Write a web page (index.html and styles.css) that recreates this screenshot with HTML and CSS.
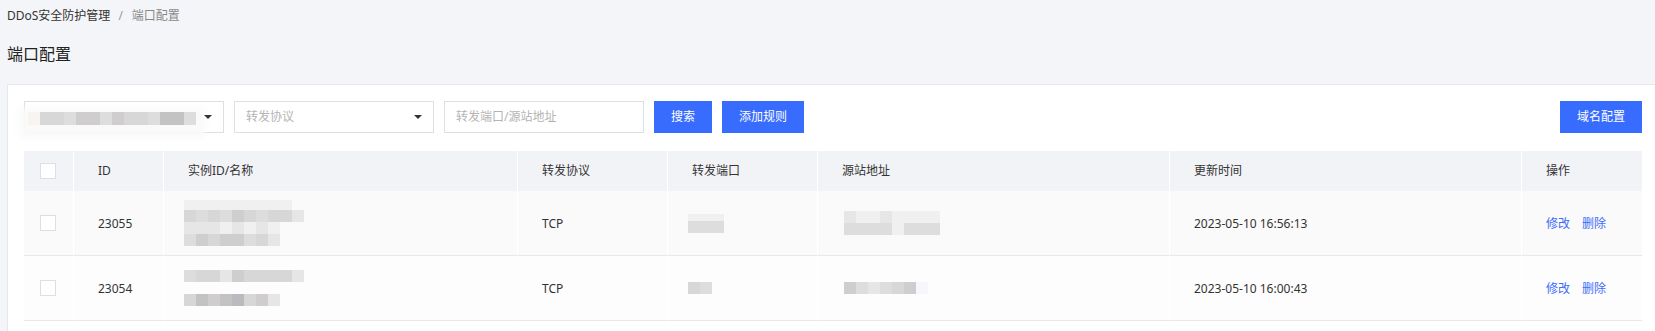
FILE: index.html
```html
<!DOCTYPE html>
<html lang="zh-CN">
<head>
<meta charset="utf-8">
<title>端口配置</title>
<link rel="stylesheet" href="styles.css">
</head>
<body>
<div class="crumb"><span class="crumb-link">DDoS安全防护管理</span><span class="crumb-sep">/</span><span class="crumb-cur">端口配置</span></div>
<h1 class="title">端口配置</h1>
<div class="panel">
  <div class="toolbar">
    <div class="select">
      <div class="mosaic mosaic-select">
        <span class="c-cream"></span><span class="g3"></span><span class="g3"></span><span class="g2"></span><span class="g4"></span><span class="g4"></span><span class="g2"></span><span class="g4"></span><span class="g3"></span><span class="g3"></span><span class="g2"></span><span class="g5"></span><span class="g5"></span><span class="g2"></span>
      </div>
      <i class="caret"></i>
    </div>
    <div class="select"><span class="placeholder">转发协议</span><i class="caret"></i></div>
    <div class="input"><span class="placeholder">转发端口/源站地址</span></div>
    <button class="btn">搜索</button>
    <button class="btn">添加规则</button>
    <button class="btn btn-right">域名配置</button>
  </div>
  <table class="grid">
    <colgroup>
      <col class="w-check"><col class="w-id"><col class="w-inst"><col class="w-proto"><col class="w-port"><col class="w-src"><col class="w-time"><col class="w-op">
    </colgroup>
    <thead>
      <tr>
        <th class="cell-check"><span class="checkbox"></span></th>
        <th>ID</th>
        <th>实例ID/名称</th>
        <th>转发协议</th>
        <th>转发端口</th>
        <th>源站地址</th>
        <th>更新时间</th>
        <th>操作</th>
      </tr>
    </thead>
    <tbody>
      <tr class="row-odd">
        <td class="cell-check"><span class="checkbox"></span></td>
        <td>23055</td>
        <td>
          <div class="mosaic m10 rows-a shift-l">
            <span class="g0"></span><span class="g0"></span><span class="g0"></span><span class="g0"></span><span class="g0"></span><span class="g0"></span><span class="g0"></span><span class="g0"></span><span class="g0"></span><span class="blank"></span>
            <span class="g3"></span><span class="g2"></span><span class="g3"></span><span class="g2"></span><span class="g4"></span><span class="g3"></span><span class="g2"></span><span class="g3"></span><span class="g3"></span><span class="g1"></span>
            <span class="g1"></span><span class="g1"></span><span class="g1"></span><span class="g0"></span><span class="g1"></span><span class="g0"></span><span class="g1"></span><span class="g0"></span><span class="blank"></span><span class="blank"></span>
            <span class="g2"></span><span class="g4"></span><span class="g3"></span><span class="g4"></span><span class="g4"></span><span class="g2"></span><span class="g3"></span><span class="g1"></span><span class="blank"></span><span class="blank"></span>
          </div>
        </td>
        <td>TCP</td>
        <td>
          <div class="mosaic m3 rows-b shift-l">
            <span class="g0"></span><span class="g0"></span><span class="g0"></span>
            <span class="g2"></span><span class="g2"></span><span class="g2"></span>
          </div>
        </td>
        <td>
          <div class="mosaic m8 shift-r">
            <span class="g1"></span><span class="g0"></span><span class="g0"></span><span class="g1"></span><span class="g0"></span><span class="g0"></span><span class="g0"></span><span class="g0"></span>
            <span class="g2"></span><span class="g2"></span><span class="g2"></span><span class="g2"></span><span class="g0"></span><span class="g2"></span><span class="g2"></span><span class="g2"></span>
          </div>
        </td>
        <td>2023-05-10 16:56:13</td>
        <td><a class="link">修改</a><a class="link">删除</a></td>
      </tr>
      <tr class="row-even">
        <td class="cell-check"><span class="checkbox"></span></td>
        <td>23054</td>
        <td>
          <div class="mosaic m10 shift-l">
            <span class="g2"></span><span class="g3"></span><span class="g3"></span><span class="g1"></span><span class="g4"></span><span class="g3"></span><span class="g3"></span><span class="g3"></span><span class="g3"></span><span class="g1"></span>
            <span class="blank"></span><span class="blank"></span><span class="blank"></span><span class="blank"></span><span class="blank"></span><span class="blank"></span><span class="blank"></span><span class="blank"></span><span class="blank"></span><span class="blank"></span>
            <span class="g3"></span><span class="g5"></span><span class="g4"></span><span class="g5"></span><span class="g6"></span><span class="g3"></span><span class="g4"></span><span class="g1"></span><span class="blank"></span><span class="blank"></span>
          </div>
        </td>
        <td>TCP</td>
        <td>
          <div class="mosaic m3 shift-l">
            <span class="g3"></span><span class="g2"></span><span class="blank"></span>
          </div>
        </td>
        <td>
          <div class="mosaic m8 shift-r">
            <span class="g4"></span><span class="g2"></span><span class="g1"></span><span class="g2"></span><span class="g3"></span><span class="g4"></span><span class="c-blue"></span><span class="blank"></span>
          </div>
        </td>
        <td>2023-05-10 16:00:43</td>
        <td><a class="link">修改</a><a class="link">删除</a></td>
      </tr>
    </tbody>
  </table>
</div>
</body>
</html>
```

FILE: styles.css
```css
* { box-sizing: border-box; }

html, body {
  margin: 0;
  padding: 0;
}

body {
  background: #f4f5f8;
  font-family: "Noto Sans", "Noto Sans CJK SC", sans-serif;
  font-size: 12px;
  color: #333;
  overflow: hidden;
}

.crumb {
  padding: 6px 7px 0;
  height: 26px;
  line-height: 20px;
  font-size: 12px;
}

.crumb-link { color: #333; }

.crumb-sep {
  color: #999;
  margin: 0 9px 0 8px;
}

.crumb-cur { color: #888; }

.title {
  margin: 16px 0 0;
  padding-left: 7px;
  font-size: 16px;
  line-height: 24px;
  font-weight: normal;
  color: #222;
}

.panel {
  margin: 18px 0 0 7px;
  background: #fff;
  border: 1px solid #e6e8eb;
  border-right: 0;
  padding: 16px 13px 0 16px;
  height: 260px;
}

.toolbar {
  display: flex;
  align-items: center;
  gap: 10px;
  height: 32px;
}

.select,
.input {
  width: 200px;
  height: 32px;
  border: 1px solid #dcdfe3;
  display: flex;
  align-items: center;
  padding: 0 11px;
  background: #fff;
}

.placeholder {
  color: #b4b4b4;
  line-height: 30px;
}

.caret {
  margin-left: auto;
  width: 0;
  height: 0;
  border-left: 4px solid transparent;
  border-right: 4px solid transparent;
  border-top: 4px solid #333;
}

.btn {
  height: 32px;
  padding: 0 17px;
  border: 0;
  background: #386cff;
  color: #fff;
  font-family: inherit;
  font-size: 12px;
  line-height: 32px;
}

.btn-right { margin-left: auto; }

/* blurred mosaic blocks */
.mosaic {
  display: grid;
  grid-auto-rows: 12px;
}

.mosaic span { display: block; }

.mosaic-select {
  grid-template-columns: repeat(14, 12px);
  grid-auto-rows: 13px;
  margin: 2px 0 0 -8px;
  box-shadow: 0 5px 6px 9px rgba(250, 250, 250, 0.92);
}

.m10 { grid-template-columns: repeat(10, 12px); }
.m8 { grid-template-columns: repeat(8, 12px); }
.m3 { grid-template-columns: repeat(3, 12px); }

.rows-a { grid-template-rows: 10px 12px 12px 12px; }
.rows-b { grid-template-rows: 7px 12px; }

.shift-l { margin-left: -4px; }
.shift-r { margin-left: 2px; }

.g0 { background: #f0f0f0; }
.g1 { background: #e6e6e6; }
.g2 { background: #dddddd; }
.g3 { background: #d7d7d8; }
.g4 { background: #cfcdcd; }
.g5 { background: #c4c3c3; }
.g6 { background: #b9bbbf; }
.blank { background: transparent; }
.c-cream { background: #f8f4ef; }
.c-blue { background: #f5f7fb; }

/* table */
.grid {
  width: 1618px;
  margin-top: 18px;
  border-collapse: separate;
  border-spacing: 0;
  table-layout: fixed;
}

.w-check { width: 49px; }
.w-id { width: 90px; }
.w-inst { width: 354px; }
.w-proto { width: 150px; }
.w-port { width: 150px; }
.w-src { width: 352px; }
.w-time { width: 352px; }
.w-op { width: 121px; }

.grid th,
.grid td {
  text-align: left;
  font-weight: normal;
  padding: 0 0 0 24px;
  border-left: 1px solid #fff;
  vertical-align: middle;
  color: #333;
  font-size: 12px;
}

.grid th {
  background: #f2f3f7;
  height: 40px;
  line-height: 20px;
}

.grid td {
  height: 65px;
  border-bottom: 1px solid #e8e8e8;
}

.grid .cell-check {
  border-left: 0;
  padding-left: 16px;
}

.row-odd td { background: #fafafa; }
.row-even td { background: #fdfdfd; }

.checkbox {
  display: block;
  width: 16px;
  height: 16px;
  border: 1px solid #dcdfe3;
  background: #fff;
}

.link {
  color: #3d6cfa;
  cursor: pointer;
  margin-right: 12px;
}
```
